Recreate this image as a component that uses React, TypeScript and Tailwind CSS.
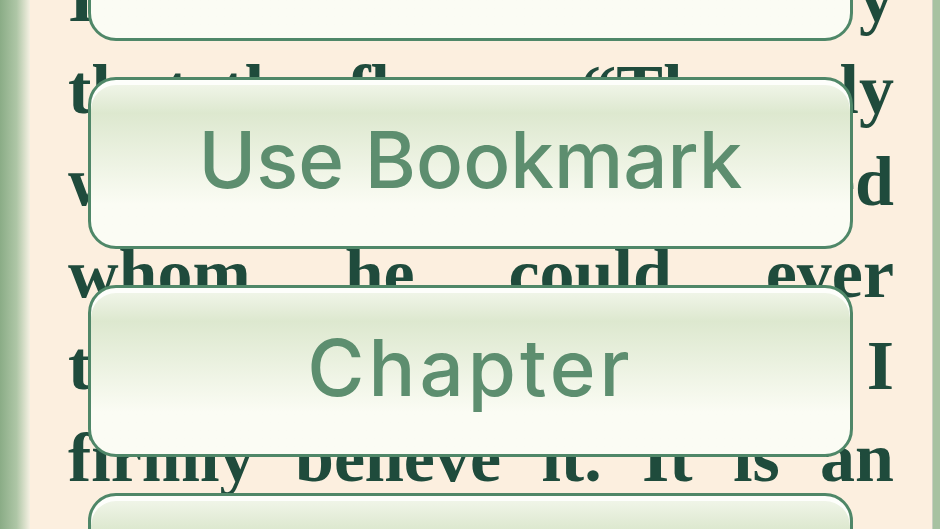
const lines = [
  "In those days his story",
  "that the flower, \u201cThe only",
  "was the one he loved",
  "whom he could ever",
  "think of as a friend, and I",
  "firmly believe it. It is an",
];

const menu = [
  { label: "Resume Reading", tracking: "tracking-normal" },
  { label: "Use Bookmark", tracking: "tracking-normal" },
  { label: "Chapter", tracking: "tracking-[4px]" },
  { label: "Close", tracking: "tracking-normal" },
];

function MenuButton({ label, tracking }: { label: string; tracking: string }) {
  return (
    <button
      className={`flex h-[172px] w-full shrink-0 items-center justify-center rounded-[28px] border-[3px] border-[#4f8768] bg-linear-to-b from-[#f3f7ec] from-0% via-[#dde8cf] via-20% to-[#fbfcf4] to-75% pb-2 text-[78px] font-medium ${tracking} text-[#5d8e6f] shadow-[inset_0_5px_0_#fdfefb]`}
      style={{ fontFamily: "Inter, 'Noto Sans', sans-serif" }}
    >
      {label}
    </button>
  );
}

export default function App() {
  return (
    <div className="relative flex h-[529px] w-[940px] overflow-hidden bg-[#fcefdf]">
      {/* left page edge */}
      <div className="w-[30px] shrink-0 bg-linear-to-r from-[#8aac86] via-[#aec6a6] via-55% to-[#f5f0e2]" />

      {/* page text */}
      <div
        className="-mt-[48px] min-w-0 flex-1 px-[38px] text-[70px] font-bold leading-[92px] text-[#1f4b3c]"
        style={{ fontFamily: "'Liberation Serif', 'DejaVu Serif', serif" }}
      >
        {lines.map((line) => (
          <div key={line} className="whitespace-nowrap text-justify [text-align-last:justify]">
            {line}
          </div>
        ))}
      </div>

      {/* right page edge */}
      <div className="w-[8px] shrink-0 border-l border-[#c9cfc0] bg-[#a7c2a1]" />

      {/* menu overlay */}
      <div className="absolute left-[88px] top-[-131px] flex w-[765px] flex-col gap-[36px]">
        {menu.map((m) => (
          <MenuButton key={m.label} label={m.label} tracking={m.tracking} />
        ))}
      </div>
    </div>
  );
}
